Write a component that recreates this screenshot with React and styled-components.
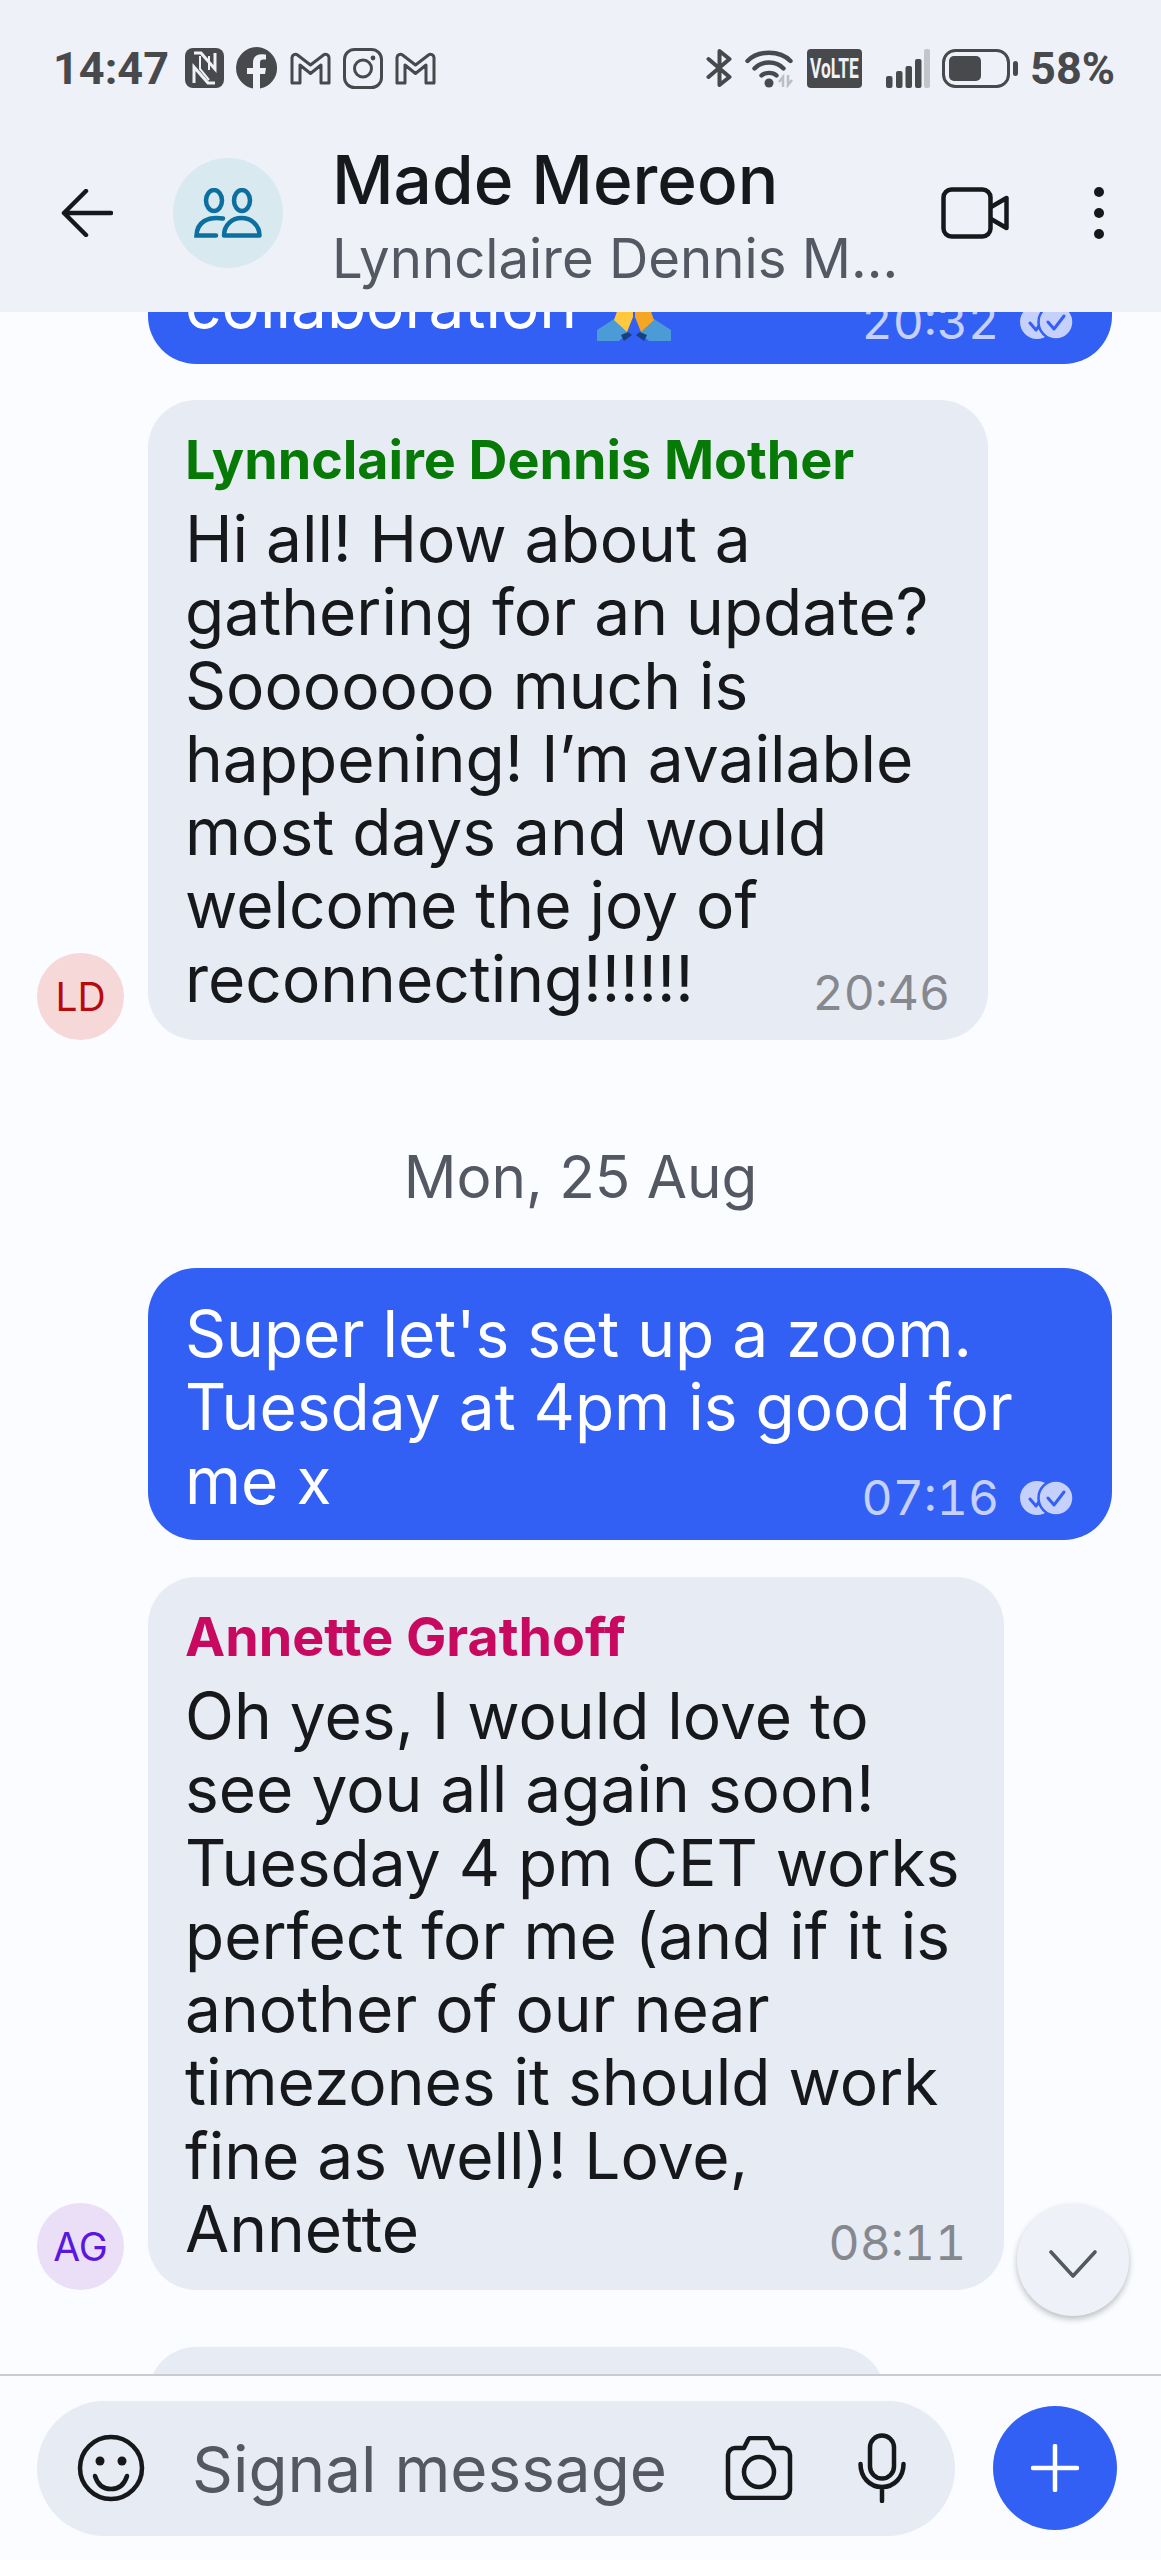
import React from "react";
import styled, { createGlobalStyle } from "styled-components";

const INK = "#17181c";
const MUTED = "#545863";
const STATUS = "#48494d";
const BLUE = "#3360f4";
const TICK = "#c5d0fb";

const GlobalStyle = createGlobalStyle`
  html, body {
    margin: 0;
    padding: 0;
    background: #fbfcff;
  }
  * {
    box-sizing: border-box;
  }
`;

const NfcIcon = () => (
  <svg width="39" height="40" viewBox="0 0 39 40">
    <rect x="0" y="0" width="39" height="40" rx="8" fill={STATUS} />
    <path d="M9 5h7l14 16V5M30 35h-7L9 19v16" fill="none" stroke="#eff1f8" strokeWidth="3" />
    <path d="M15 8v13l9 11M24 8v14" fill="none" stroke="#eff1f8" strokeWidth="2" />
  </svg>
);

const FacebookIcon = () => (
  <svg width="42" height="42" viewBox="0 0 42 42">
    <path
      d="M21 0a21 21 0 0 0-4 41.6V27h-6v-6h6v-5c0-6 3.4-8.800 8.400-8.800 2.200 0 4.600.4 4.600.4v5h-2.600c-2.800 0-3.400 1.600-3.400 3.400v5h6l-1 6h-5v14.600A21 21 0 0 0 21 0z"
      fill={STATUS}
    />
  </svg>
);

const MailIcon = () => (
  <svg width="41" height="33" viewBox="0 0 41 33">
    <path
      d="M2 5.500A3.500 3.500 0 0 1 7.500 3L20.500 13 33.500 3A3.500 3.500 0 0 1 39 5.500V31H31V13L20.500 21.500 10 13V31H2Z"
      fill="none"
      stroke={STATUS}
      strokeWidth="3"
      strokeLinejoin="round"
    />
  </svg>
);

const InstagramIcon = () => (
  <svg width="40" height="41" viewBox="0 0 40 41">
    <rect x="1.500" y="1.500" width="37" height="38" rx="10" fill="none" stroke={STATUS} strokeWidth="3" />
    <circle cx="20" cy="20.500" r="8.500" fill="none" stroke={STATUS} strokeWidth="3" />
    <circle cx="30" cy="10" r="2.400" fill={STATUS} />
  </svg>
);

const BluetoothIcon = () => (
  <svg width="27" height="38" viewBox="0 0 27 38">
    <path
      d="M2.500 10l21 18-10 8V2l10 8-21 18"
      fill="none"
      stroke={STATUS}
      strokeWidth="4"
      strokeLinecap="round"
      strokeLinejoin="round"
    />
  </svg>
);

const WifiIcon = () => (
  <svg width="50" height="39" viewBox="0 0 50 39" fill="none" stroke={STATUS} strokeWidth="4.400" strokeLinecap="round">
    <path d="M2.500 12C13 1 35 1 45.500 12" />
    <path d="M9.500 19.500C17 11.500 31 11.500 38.500 19.500" />
    <path d="M16.500 26.500C20 23 28 23 31.500 26.500" />
    <circle cx="24" cy="34" r="4.500" fill={STATUS} stroke="none" />
    <path d="M38 38V28l-4 5M43 26v10l4-5" stroke="#bcbec4" strokeWidth="2.500" strokeLinecap="butt" />
  </svg>
);

const SignalIcon = () => (
  <svg width="44" height="39" viewBox="0 0 44 39">
    <rect x="0" y="27" width="6.500" height="12" rx="2" fill={STATUS} />
    <rect x="10" y="22" width="6.500" height="17" rx="2" fill={STATUS} />
    <rect x="19.500" y="17" width="6.500" height="22" rx="2" fill={STATUS} />
    <rect x="29" y="10" width="6.500" height="29" rx="2" fill={STATUS} />
    <rect x="38" y="0" width="6" height="39" rx="2" fill="#c3c5cb" />
  </svg>
);

const BatteryIcon = () => (
  <svg width="76" height="39" viewBox="0 0 76 39">
    <rect x="1.500" y="1.500" width="65" height="36" rx="12" fill="none" stroke={STATUS} strokeWidth="3" />
    <rect x="7" y="7" width="32" height="25" rx="5" fill={STATUS} />
    <rect x="71" y="12" width="5" height="15" rx="2.500" fill={STATUS} />
  </svg>
);

const BackIcon = () => (
  <svg width="52" height="48" viewBox="0 0 52 48">
    <path
      d="M50 24H3M25 2L3 24l22 22"
      fill="none"
      stroke={INK}
      strokeWidth="4.500"
      strokeLinecap="round"
      strokeLinejoin="round"
    />
  </svg>
);

const GroupIcon = () => (
  <svg width="68" height="50" viewBox="0 0 68 50" fill="none" stroke="#0b6fa0" strokeWidth="4.500">
    <ellipse cx="20" cy="12.500" rx="8" ry="10.500" />
    <ellipse cx="48" cy="12.500" rx="8" ry="10.500" />
    <path d="M29 30.500C14 28 3 34 2.500 47.500H22" strokeLinecap="round" />
    <path d="M30 47.500C30 37 38 30 47.500 30S65.500 37 65.500 47.500Z" strokeLinejoin="round" />
  </svg>
);

const VideoIcon = () => (
  <svg width="68" height="52" viewBox="0 0 68 52" fill="none" stroke={INK} strokeWidth="4.500" strokeLinejoin="round">
    <rect x="2.500" y="2.500" width="47" height="47" rx="8" />
    <path d="M50 20L65.500 11V41L50 32" />
  </svg>
);

const DotsIcon = () => (
  <svg width="12" height="52" viewBox="0 0 12 52" fill={INK}>
    <circle cx="6" cy="5" r="5" />
    <circle cx="6" cy="26" r="5" />
    <circle cx="6" cy="47" r="5" />
  </svg>
);

const ReadIcon = () => (
  <svg width="55" height="36" viewBox="0 0 55 36">
    <circle cx="18" cy="18" r="17" fill={TICK} />
    <path d="M11 19l6 7 9-12" fill="none" stroke={BLUE} strokeWidth="3" strokeLinecap="round" strokeLinejoin="round" />
    <circle cx="37" cy="18" r="17.500" fill={TICK} stroke={BLUE} strokeWidth="2.500" />
    <path d="M29 18l6 7 10-13" fill="none" stroke={BLUE} strokeWidth="3" strokeLinecap="round" strokeLinejoin="round" />
  </svg>
);

const PrayIcon = () => (
  <svg width="74" height="76" viewBox="0 0 74 76">
    <path d="M0 65L17 54 31 68 22 76H0z" fill="#4a9bd6" />
    <path d="M74 65L57 54 43 68 52 76H74z" fill="#4a9bd6" />
    <path d="M24 70l7-3 4 3-8 6z" fill="#17407f" />
    <path d="M50 70l-7-3-4 3 8 6z" fill="#17407f" />
    <path d="M36 0L36 52 30 67 17 55 23 38z" fill="#ffc83d" />
    <path d="M38 0L38 52 44 67 57 55 51 38z" fill="#f5a623" />
  </svg>
);

const ChevronIcon = () => (
  <svg width="48" height="28" viewBox="0 0 48 28">
    <path d="M2 2l22 24L46 2" fill="none" stroke={MUTED} strokeWidth="3.600" strokeLinecap="round" strokeLinejoin="round" />
  </svg>
);

const SmileIcon = () => (
  <svg width="68" height="68" viewBox="0 0 68 68" fill="none" stroke={INK} strokeWidth="4.500">
    <circle cx="34" cy="34" r="31" />
    <circle cx="23" cy="27" r="4.500" fill={INK} stroke="none" />
    <circle cx="45" cy="27" r="4.500" fill={INK} stroke="none" />
    <path d="M18 42c3 10 10 13 16 13s13-3 16-13" strokeLinecap="round" />
  </svg>
);

const CameraIcon = () => (
  <svg width="68" height="64" viewBox="0 0 68 64" fill="none" stroke={INK} strokeWidth="4.500" strokeLinejoin="round">
    <path d="M3 19a7 7 0 0 1 7-7h9l4-8a3 3 0 0 1 3-2h16a3 3 0 0 1 3 2l4 8h9a7 7 0 0 1 7 7v35a8 8 0 0 1-8 8H11a8 8 0 0 1-8-8z" />
    <circle cx="34" cy="36" r="15" />
  </svg>
);

const MicIcon = () => (
  <svg width="48" height="70" viewBox="0 0 48 70" fill="none" stroke={INK} strokeWidth="4.500" strokeLinecap="round">
    <rect x="12" y="2.500" width="24" height="43" rx="12" />
    <path d="M2.500 31c0 13 9 23 21.500 23s21.500-10 21.500-23M24 54v14" />
  </svg>
);

const PlusIcon = () => (
  <svg width="48" height="48" viewBox="0 0 48 48">
    <path d="M24 2v44M2 24h44" stroke="#fff" strokeWidth="4.500" strokeLinecap="round" />
  </svg>
);

const App = () => {
  return (
    <Page>
      <GlobalStyle />
      <Header>
        <StatusBar>
          <StatusGroup>
            <Clock>14:47</Clock>
            <NfcIcon />
            <FacebookIcon />
            <MailIcon />
            <InstagramIcon />
            <MailIcon />
          </StatusGroup>
          <StatusGroup>
            <BluetoothIcon />
            <WifiIcon />
            <VolteBadge>
              <VolteText>VoLTE</VolteText>
            </VolteBadge>
            <SignalIcon />
            <BatteryIcon />
            <BatteryText>58%</BatteryText>
          </StatusGroup>
        </StatusBar>
        <NavBar>
          <BackIcon />
          <GroupAvatar>
            <GroupIcon />
          </GroupAvatar>
          <Titles>
            <Title>Made Mereon</Title>
            <Subtitle>Lynnclaire Dennis M...</Subtitle>
          </Titles>
          <VideoIcon />
          <MenuDots>
            <DotsIcon />
          </MenuDots>
        </NavBar>
      </Header>

      <MessageList>
        <ClippedRow>
          <Bubble $mine $width="964px">
            <ClippedLine>
              <span>collaboration</span>
              <PrayIcon />
              <Meta $mine $pushed>
                <Time $mine>20:32</Time>
                <ReadIcon />
              </Meta>
            </ClippedLine>
          </Bubble>
        </ClippedRow>

        <Row $gapTop="36px">
          <Avatar $bg="#f6d8d8" $fg="#b80a0a">LD</Avatar>
          <Bubble $width="840px">
            <Sender $color="#067906">Lynnclaire Dennis Mother</Sender>
            <Body>
              Hi all! How about a
              <br />
              gathering for an update?
              <br />
              Sooooooo much is
              <br />
              happening! I’m available
              <br />
              most days and would
              <br />
              welcome the joy of
            </Body>
            <LastLine>
              <span>reconnecting!!!!!!</span>
              <Meta>
                <Time>20:46</Time>
              </Meta>
            </LastLine>
          </Bubble>
        </Row>

        <DateLabel>Mon, 25 Aug</DateLabel>

        <Row $mine>
          <Bubble $mine $width="964px">
            <Body>
              Super let's set up a zoom.
              <br />
              Tuesday at 4pm is good for
            </Body>
            <LastLine>
              <span>me x</span>
              <Meta $mine>
                <Time $mine>07:16</Time>
                <ReadIcon />
              </Meta>
            </LastLine>
          </Bubble>
        </Row>

        <Row $gapTop="37px">
          <Avatar $bg="#eadff7" $fg="#5a17e0">AG</Avatar>
          <Bubble $width="856px">
            <Sender $color="#c70a5f">Annette Grathoff</Sender>
            <Body>
              Oh yes, I would love to
              <br />
              see you all again soon!
              <br />
              Tuesday 4 pm CET works
              <br />
              perfect for me (and if it is
              <br />
              another of our near
              <br />
              timezones it should work
              <br />
              fine as well)! Love,
            </Body>
            <LastLine>
              <span>Annette</span>
              <Meta>
                <Time>08:11</Time>
              </Meta>
            </LastLine>
          </Bubble>
        </Row>

        <Row $gapTop="57px">
          <AvatarSpacer />
          <Bubble $width="737px" $height="120px" />
        </Row>

        <ScrollDown>
          <ChevronIcon />
        </ScrollDown>
      </MessageList>

      <Composer>
        <InputPill>
          <SmileIcon />
          <Placeholder>Signal message</Placeholder>
          <CameraIcon />
          <MicSlot>
            <MicIcon />
          </MicSlot>
        </InputPill>
        <PlusButton>
          <PlusIcon />
        </PlusButton>
      </Composer>
    </Page>
  );
};

export default App;

const Page = styled.div`
  display: flex;
  flex-direction: column;
  width: 1161px;
  height: 2560px;
  overflow: hidden;
  background: #fbfcff;
  font-family: Inter, "Liberation Sans", sans-serif;
  color: ${INK};
`;

const Header = styled.header`
  position: relative;
  z-index: 1;
  flex: none;
  height: 312px;
  padding-top: 48px;
  background: #eff1f8;
  overflow: hidden;
`;

const StatusBar = styled.div`
  display: flex;
  justify-content: space-between;
  align-items: center;
  height: 40px;
  padding: 0 46px 0 53px;
`;

const StatusGroup = styled.div`
  display: flex;
  align-items: center;
  gap: 12px;
`;

const Clock = styled.span`
  width: 120px;
  font-family: Roboto, sans-serif;
  font-size: 45px;
  font-weight: 700;
  color: ${STATUS};
`;

const BatteryText = styled.span`
  font-family: Roboto, sans-serif;
  font-size: 45px;
  font-weight: 700;
  color: ${STATUS};
`;

const VolteBadge = styled.div`
  display: flex;
  justify-content: center;
  align-items: center;
  width: 55px;
  height: 39px;
  margin-right: 12px;
  border-radius: 4px;
  background: ${STATUS};
`;

const VolteText = styled.span`
  font-family: Roboto, sans-serif;
  font-size: 28px;
  font-weight: 700;
  color: #eff1f8;
  transform: scaleX(0.62);
`;

const NavBar = styled.div`
  display: flex;
  align-items: center;
  height: 110px;
  margin-top: 70px;
  padding-left: 61px;
`;

const GroupAvatar = styled.div`
  display: flex;
  flex: none;
  justify-content: center;
  align-items: center;
  width: 110px;
  height: 110px;
  margin-left: 60px;
  border-radius: 50%;
  background: #d9e9f0;
`;

const Titles = styled.div`
  flex: none;
  align-self: flex-start;
  width: 609px;
  margin-top: -13px;
  margin-left: 49px;
`;

const Title = styled.div`
  font-size: 67.5px;
  line-height: 70px;
  font-weight: 500;
`;

const Subtitle = styled.div`
  margin-top: 8px;
  font-size: 54.500px;
  line-height: 70px;
  white-space: nowrap;
  color: ${MUTED};
`;

const MenuDots = styled.div`
  display: flex;
  margin-left: 84px;
`;

const MessageList = styled.main`
  position: relative;
  flex: 1;
  min-height: 0;
  overflow: hidden;
  display: flex;
  flex-direction: column;
  align-items: stretch;
  border-bottom: 2px solid #c9cbd1;
`;

const Row = styled.div`
  display: flex;
  flex: none;
  justify-content: ${(p) => (p.$mine ? "flex-end" : "flex-start")};
  align-items: flex-end;
  gap: 24px;
  margin-top: ${(p) => p.$gapTop || "0"};
  padding: 0 49px 0 37px;
`;

const ClippedRow = styled(Row)`
  justify-content: flex-end;
  margin-top: -72px;
`;

const Bubble = styled.div`
  flex: none;
  width: ${(p) => p.$width};
  height: ${(p) => p.$height || "auto"};
  padding: ${(p) => (p.$mine ? "29px 38px 23px 37px" : "30px 38px 25px 37px")};
  border-radius: 48px;
  background: ${(p) => (p.$mine ? BLUE : "#e7ebf3")};
  color: ${(p) => (p.$mine ? "#fff" : INK)};
  font-size: 64px;
  line-height: 73.300px;
`;

const ClippedLine = styled.div`
  display: flex;
  align-items: flex-end;
  gap: 20px;
  height: 72px;
`;

const Sender = styled.div`
  font-size: 53.800px;
  line-height: 60px;
  font-weight: 700;
  margin-bottom: 12px;
  color: ${(p) => p.$color};
`;

const Body = styled.div`
  white-space: nowrap;
`;

const LastLine = styled.div`
  display: flex;
  justify-content: space-between;
  align-items: flex-end;
  white-space: nowrap;
`;

const Meta = styled.div`
  display: flex;
  align-items: center;
  gap: 20px;
  margin-left: ${(p) => (p.$pushed ? "auto" : "0")};
  margin-bottom: ${(p) => (p.$mine ? "-11px" : "-8px")};
`;

const Time = styled.span`
  font-size: 48px;
  line-height: 60px;
  font-variant-numeric: tabular-nums;
  color: ${(p) => (p.$mine ? TICK : "#85888f")};
`;

const Avatar = styled.div`
  display: flex;
  flex: none;
  justify-content: center;
  align-items: center;
  width: 87px;
  height: 87px;
  border-radius: 50%;
  background: ${(p) => p.$bg};
  color: ${(p) => p.$fg};
  font-size: 39px;
`;

const AvatarSpacer = styled.div`
  flex: none;
  width: 87px;
`;

const DateLabel = styled.div`
  flex: none;
  margin: 101px 0 55px;
  text-align: center;
  font-size: 58.400px;
  line-height: 72px;
  color: ${MUTED};
`;

const ScrollDown = styled.div`
  position: absolute;
  top: 1892px;
  right: 32px;
  display: flex;
  justify-content: center;
  align-items: center;
  width: 112px;
  height: 112px;
  padding-top: 8px;
  border-radius: 50%;
  background: #eff1f8;
  box-shadow: 0 3px 6px rgba(0, 0, 0, 0.25);
`;

const Composer = styled.footer`
  flex: none;
  display: flex;
  align-items: center;
  gap: 38px;
  height: 184px;
  padding: 0 44px 0 37px;
  background: #fbfcff;
`;

const InputPill = styled.div`
  display: flex;
  align-items: center;
  flex: 1;
  height: 135px;
  padding-left: 40px;
  border-radius: 68px;
  background: #e7ebf3;
`;

const Placeholder = styled.span`
  width: 533px;
  margin-left: 47px;
  font-size: 63.800px;
  white-space: nowrap;
  color: ${MUTED};
`;

const MicSlot = styled.div`
  display: flex;
  margin-left: 65px;
`;

const PlusButton = styled.div`
  display: flex;
  flex: none;
  justify-content: center;
  align-items: center;
  width: 124px;
  height: 124px;
  border-radius: 50%;
  background: ${BLUE};
`;
